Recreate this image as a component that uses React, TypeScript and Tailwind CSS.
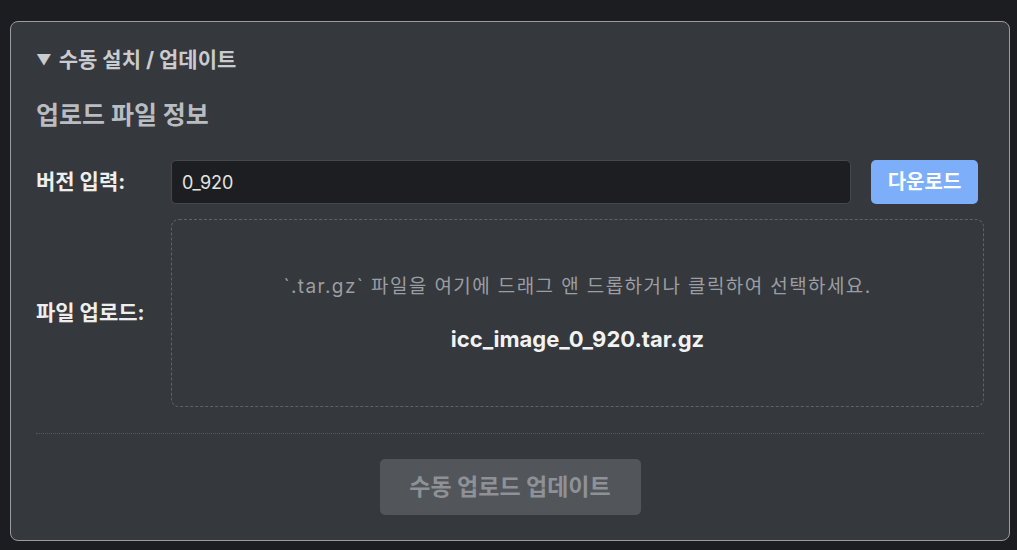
import React, { useState } from 'react';

const App: React.FC = () => {
  const [version, setVersion] = useState('0_920');

  return (
    <div className="min-h-screen w-full bg-[#1c1d21] pt-[21px] pl-[10px] pr-[8px] font-['Inter','Noto_Sans_CJK_KR',sans-serif]">
      <details open className="w-[1000px] rounded-[8px] border border-[#9a9ca1] bg-[#35383c] p-[25px]">
        <summary className="flex h-[26px] cursor-pointer list-none items-center text-[21px] font-bold text-[#c9cbcf]">
          <span className="mr-[7px] text-[15px]">▼</span>
          수동 설치 / 업데이트
        </summary>

        {/* Upload info */}
        <h3 className="mt-[28px] flex h-[30px] items-center text-[25px] font-bold text-[#b9bcc0]">업로드 파일 정보</h3>

        <div className="mt-[29px] flex h-[44px] items-center">
          <label className="w-[135px] shrink-0 text-[21px] font-bold text-[#eeeeee]">버전 입력:</label>
          <input
            value={version}
            onChange={(e) => setVersion(e.target.value)}
            className="h-[44px] w-[680px] rounded-[5px] border border-[#45484d] bg-[#1d1e21] px-[10px] text-[18px] text-[#e4e4e4] outline-none"
          />
          <button className="ml-[20px] h-[44px] w-[107px] rounded-[5px] bg-[#7caefa] text-[20px] font-semibold text-white">
            다운로드
          </button>
        </div>

        <div className="mt-[15px] flex items-center">
          <label className="w-[135px] shrink-0 text-[21px] font-bold text-[#eeeeee]">파일 업로드:</label>
          <div className="flex h-[188px] flex-1 cursor-pointer flex-col items-center justify-center gap-[28px] rounded-[8px] border border-dashed border-[#5f6368]">
            <p className="h-[24px] text-[19px] leading-[24px] tracking-[1.4px] text-[#9b9ea2]">
              `.tar.gz` 파일을 여기에 드래그 앤 드롭하거나 클릭하여 선택하세요.
            </p>
            <p className="h-[24px] text-[22px] font-bold leading-[24px] text-[#f2f2f2]">icc_image_0_920.tar.gz</p>
          </div>
        </div>

        <div className="mt-[26px] border-t border-dotted border-[#55595e]" />

        <div className="mt-[25px] flex justify-center">
          <button disabled className="h-[56px] w-[261px] rounded-[5px] bg-[#52565b] text-[23px] font-bold text-[#8e9297]">
            수동 업로드 업데이트
          </button>
        </div>
      </details>
    </div>
  );
};

export default App;
